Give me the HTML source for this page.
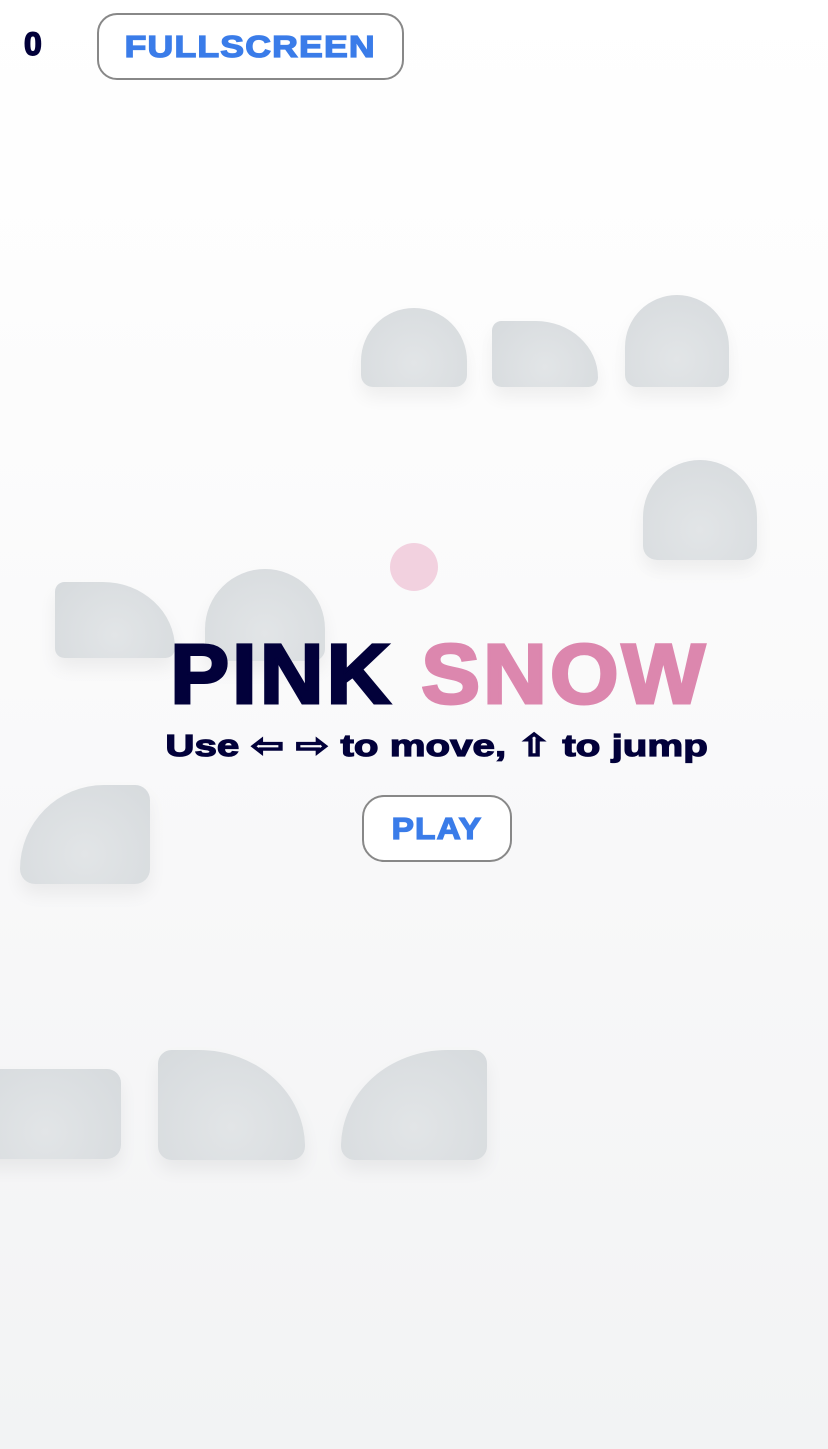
<!DOCTYPE html>
<html><head><style>
html,body{margin:0;padding:0}
body{width:828px;height:1449px;position:relative;overflow:hidden;background:linear-gradient(#fff 0%,#fdfdfd 20%,#f8f8f9 60%,#f2f3f4 100%);font-family:"Liberation Sans","DejaVu Sans",sans-serif;font-weight:bold}
.b{position:absolute;background:radial-gradient(circle at 50% 70%,#e2e5e7,#d6dadd);box-shadow:0 10px 18px rgba(0,0,0,0.06)}
.btn{position:absolute;border:2px solid #888;border-radius:20px;background:#fff;color:#3a7ce9;font-size:31px;display:flex;align-items:center;justify-content:center;box-sizing:border-box;letter-spacing:1px;-webkit-text-stroke:1.3px #3a7ce9}
</style></head><body>
<div style="position:absolute;left:24px;top:26px;font-size:32px;color:#02013a;-webkit-text-stroke:1.5px #02013a">0</div>
<div class="btn" style="left:97px;top:13px;width:307px;height:67px"><span style="display:inline-block;transform:scaleX(1.15)">FULLSCREEN</span></div>

<div class="b" style="left:361px;top:308px;width:106px;height:79px;border-radius:53px 53px 12px 12px"></div>
<div class="b" style="left:492px;top:321px;width:106px;height:66px;border-radius:10px 66px 10px 10px/10px 60px 10px 10px"></div>
<div class="b" style="left:625px;top:295px;width:104px;height:92px;border-radius:52px 52px 12px 12px"></div>
<div class="b" style="left:643px;top:460px;width:114px;height:100px;border-radius:57px 57px 14px 14px"></div>
<div class="b" style="left:55px;top:582px;width:120px;height:76px;border-radius:10px 76px 10px 10px/10px 70px 10px 10px"></div>
<div class="b" style="left:205px;top:569px;width:120px;height:92px;border-radius:60px 60px 12px 12px"></div>
<div class="b" style="left:20px;top:785px;width:130px;height:99px;border-radius:90px 16px 16px 16px/90px 16px 16px 16px"></div>
<div class="b" style="left:-30px;top:1069px;width:151px;height:90px;border-radius:14px"></div>
<div class="b" style="left:158px;top:1050px;width:147px;height:110px;border-radius:14px 110px 14px 14px/14px 100px 14px 14px"></div>
<div class="b" style="left:341px;top:1050px;width:146px;height:110px;border-radius:110px 14px 14px 14px/100px 14px 14px 14px"></div>
<div style="position:absolute;left:390px;top:543px;width:48px;height:48px;border-radius:50%;background:#f2d1df"></div>

<div style="position:absolute;left:0;width:828px;top:624px;text-align:center;font-size:84px;line-height:100px;letter-spacing:3px"><span style="display:inline-block;transform:scaleX(1.05);margin-left:50px"><span style="color:#02013a;-webkit-text-stroke:3px #02013a">PINK</span> <span style="color:#dc87ae;-webkit-text-stroke:3px #dc87ae">SNOW</span></span></div>
<div style="position:absolute;left:0;width:828px;top:724px;text-align:center;font-size:31px;line-height:44px;color:#02013a;-webkit-text-stroke:1.2px #02013a"><span style="display:inline-block;margin-left:46px;transform:scaleX(1.3)">Use ⇦ ⇨ to move, ⇧ to jump</span></div>
<div class="btn" style="left:362px;top:795px;width:150px;height:67px;border-radius:22px"><span style="display:inline-block;transform:scaleX(1.08)">PLAY</span></div>
</body></html>
